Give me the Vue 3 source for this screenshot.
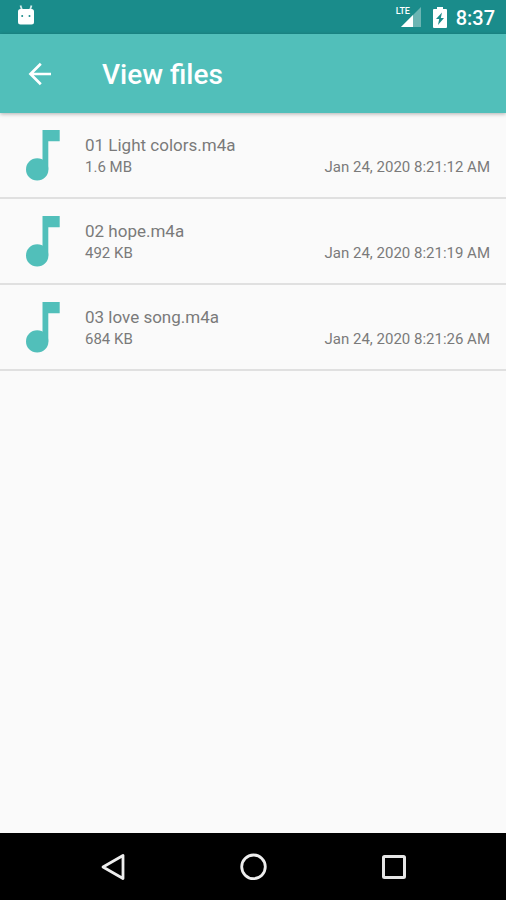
<script setup>
const files = [
  { name: '01 Light colors.m4a', size: '1.6 MB', date: 'Jan 24, 2020 8:21:12 AM' },
  { name: '02 hope.m4a', size: '492 KB', date: 'Jan 24, 2020 8:21:19 AM' },
  { name: '03 love song.m4a', size: '684 KB', date: 'Jan 24, 2020 8:21:26 AM' },
]
</script>

<template>
  <div class="screen">
    <div class="status">
      <svg class="droid" width="18" height="20" viewBox="0 0 18 20" aria-hidden="true">
        <path d="M3.500 0.500L5 5M14.500 0.500L13 5" stroke="#d5eceb" stroke-width="1.800" />
        <rect x="1" y="4" width="16" height="15.500" rx="2.500" fill="#fff" />
        <circle cx="5.200" cy="11" r="1" fill="#1a8c8b" />
        <circle cx="12.500" cy="11" r="1" fill="#1a8c8b" />
      </svg>
      <div class="indicators">
        <div class="signal">
          <svg width="20" height="20" viewBox="0 0 20 20" aria-hidden="true">
            <path d="M20 0V20H0z" fill="#6cb5b3" />
            <path d="M12 8V20H0z" fill="#fff" />
          </svg>
          <span class="lte">LTE</span>
        </div>
        <svg class="battery" width="14" height="21" viewBox="0 0 14 21" aria-hidden="true">
          <path d="M4 0h6v2h3q1 0 1 1v17q0 1-1 1H1q-1 0-1-1V3q0-1 1-1h3z" fill="#fff" />
          <path d="M9 5.500L3 12h3.200L5 18l6-7H7.800z" fill="#1a8c8b" />
        </svg>
        <span class="clock">8:37</span>
      </div>
    </div>

    <header class="appbar">
      <button class="back" type="button" aria-label="Back">
        <svg width="24" height="24" viewBox="0 0 24 24" aria-hidden="true">
          <path d="M23 12H2.500M12.800 1.800L2.500 12L12.800 22.200" fill="none" stroke="#fff" stroke-width="2.700" />
        </svg>
      </button>
      <h1>View files</h1>
    </header>

    <main>
      <ul class="files">
        <li v-for="file in files" :key="file.name" class="file">
          <svg class="note" width="34" height="51" viewBox="0 0 34 51" aria-hidden="true">
            <path d="M16.500 0H33.700V11.200H22.300V39.500H16.500z" fill="#51bfba" />
            <circle cx="11.200" cy="39.400" r="11.200" fill="#51bfba" />
          </svg>
          <div class="info">
            <div class="name">{{ file.name }}</div>
            <div class="meta">
              <span>{{ file.size }}</span>
              <span>{{ file.date }}</span>
            </div>
          </div>
        </li>
      </ul>
    </main>

    <nav class="navbar">
      <button type="button" aria-label="Back">
        <svg width="28" height="28" viewBox="0 0 28 28" aria-hidden="true">
          <path d="M24 2.500V25.500L4 14z" fill="none" stroke="#eee" stroke-width="2.800" stroke-linejoin="round" />
        </svg>
      </button>
      <button type="button" aria-label="Home">
        <svg width="28" height="28" viewBox="0 0 28 28" aria-hidden="true">
          <circle cx="14.500" cy="13.800" r="11.800" fill="none" stroke="#eee" stroke-width="2.800" />
        </svg>
      </button>
      <button type="button" aria-label="Recent apps">
        <svg width="28" height="28" viewBox="0 0 28 28" aria-hidden="true">
          <rect x="4.500" y="3.500" width="21" height="21" rx="1" fill="none" stroke="#e6e6e6" stroke-width="3" />
        </svg>
      </button>
    </nav>
  </div>
</template>

<style>
body {
  margin: 0;
  background: #fafafa;
}
</style>

<style scoped>
.screen {
  min-height: 100vh;
  display: flex;
  flex-direction: column;
  font-family: Roboto, "Liberation Sans", sans-serif;
  background: #fafafa;
}
svg {
  display: block;
}
button {
  border: 0;
  padding: 0;
  background: none;
  display: flex;
  align-items: center;
  justify-content: center;
  cursor: pointer;
}
.status {
  height: 34px;
  display: flex;
  align-items: center;
  justify-content: space-between;
  box-sizing: border-box;
  padding: 0 11px 0 17px;
  background: #1a8c8b;
  color: #fff;
}
.droid {
  margin-bottom: 4px;
}
.indicators {
  display: flex;
  align-items: center;
}
.signal {
  position: relative;
}
.lte {
  position: absolute;
  top: 0;
  left: -5px;
  font-size: 9px;
  line-height: 9px;
  font-weight: 500;
}
.battery {
  margin: 0 9px 0 12px;
}
.clock {
  font-size: 20px;
  line-height: 24px;
  font-weight: 500;
  padding-top: 2px;
}
.appbar {
  position: relative;
  height: 79px;
  display: flex;
  align-items: center;
  padding-left: 16px;
  gap: 38px;
  background: #51bfba;
  box-shadow: 0 1px 4px rgba(0, 0, 0, 0.3);
}
.back {
  width: 48px;
  height: 48px;
}
h1 {
  margin: 0;
  padding-top: 2px;
  color: #fff;
  font-size: 28px;
  line-height: 32px;
  font-weight: 500;
}
main {
  flex: 1;
}
.files {
  list-style: none;
  margin: 0;
  padding: 0;
}
.file {
  display: flex;
  align-items: center;
  gap: 25px;
  box-sizing: border-box;
  height: 86px;
  padding: 0 16px 0 26px;
  border-bottom: 2px solid #e0e0e0;
}
.info {
  flex: 1;
  padding-top: 2px;
  color: #7a7a7a;
}
.name {
  font-size: 17px;
  line-height: 22px;
}
.meta {
  display: flex;
  justify-content: space-between;
  font-size: 15px;
  line-height: 22px;
}
.navbar {
  height: 67px;
  display: flex;
  align-items: center;
  justify-content: center;
  gap: 92px;
  background: #000;
}
.navbar button {
  width: 48px;
  height: 48px;
}
</style>
